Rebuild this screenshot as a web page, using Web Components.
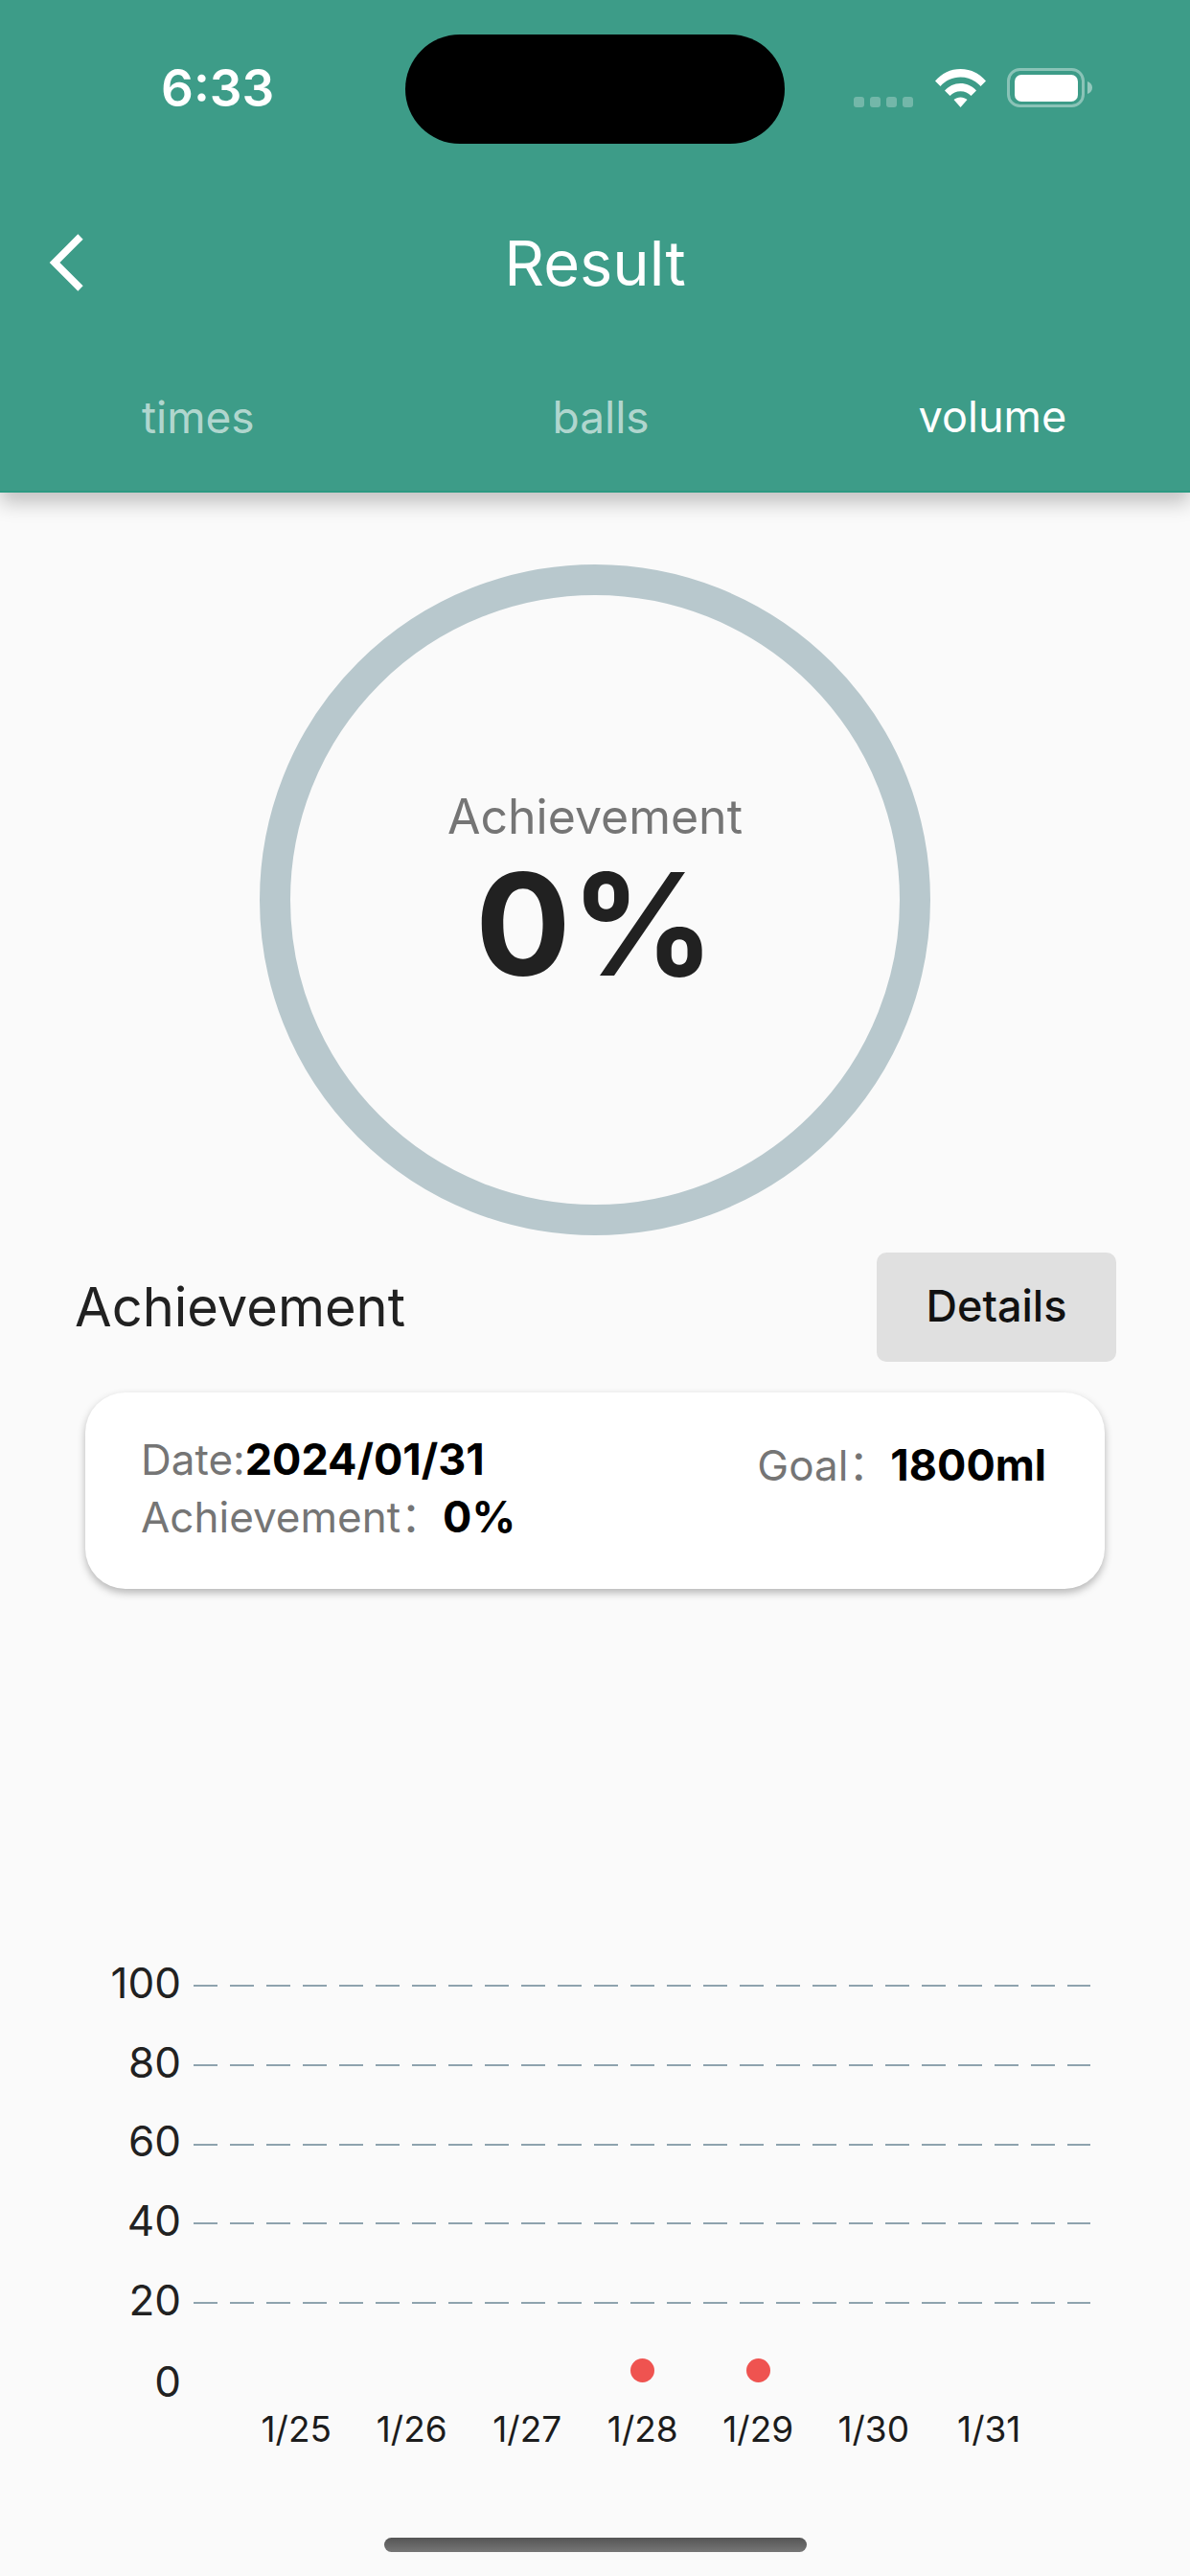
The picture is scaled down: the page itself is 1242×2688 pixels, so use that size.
<!DOCTYPE html>
<html lang="en">
<head>
<meta charset="utf-8">
<title>Result</title>
<style>
  html, body { margin: 0; padding: 0; background: #fafafa; }
  body { width: 1242px; height: 2688px; overflow: hidden; font-family: Inter, "Noto Sans CJK SC", "Liberation Sans", sans-serif; }
</style>
</head>
<body>
<result-page></result-page>
<script>
class StatusBar extends HTMLElement {
  constructor () {
    super()
    this._shadowRoot = this.attachShadow({ mode: 'open' })
    this._shadowRoot.innerHTML = `
      <style>
      :host { display: grid; grid-template-columns: 423px 396px 423px; padding-top: 36px; height: 114px; color: #fff; }
      .time { font-size: 53px; font-weight: 600; line-height: 112px; padding-left: 168px; }
      .island { background: #000; border-radius: 57px; height: 114px; }
      .icons { display: flex; align-items: flex-start; padding: 35px 0 0 72px; }
      svg { display: block; }
      </style>
      <div class="time">6:33</div>
      <div class="island"></div>
      <div class="icons">
        <svg width="250" height="42" viewBox="0 0 250 42">
          <g fill="#fff" fill-opacity=".28">
            <rect x="0" y="30" width="11" height="11" rx="3"/>
            <rect x="17" y="30" width="11" height="11" rx="3"/>
            <rect x="34" y="30" width="11" height="11" rx="3"/>
            <rect x="51" y="30" width="11" height="11" rx="3"/>
          </g>
          <path fill="#fff" d="M85 13.500C92 5.500 101 1 111.500 1S131 5.500 138 13.500L132.500 19C127 13 120 9.500 111.500 9.500S96 13 90.500 19Z"/>
          <path fill="#fff" d="M95 23.500C99 19 105 16 111.500 16S124 19 128 23.500L122.500 29C119.500 26 116 24.200 111.500 24.200S103.500 26 100.500 29Z"/>
          <path fill="#fff" d="M104.500 33C106.500 31.500 109 30.500 111.500 30.500S116.500 31.500 118.500 33L111.500 41Z"/>
          <rect x="161.500" y="1.500" width="78" height="38" rx="12" fill="none" stroke="#fff" stroke-opacity=".4" stroke-width="3"/>
          <rect x="168" y="7" width="66" height="28" rx="7" fill="#fff"/>
          <path fill="#fff" fill-opacity=".45" d="M244 14c3 1 5 3.500 5 6.500s-2 5.500-5 6.500Z"/>
        </svg>
      </div>
    `
  }
}

class AppHeader extends HTMLElement {
  constructor () {
    super()
    this._shadowRoot = this.attachShadow({ mode: 'open' })
    this._shadowRoot.innerHTML = `
      <style>
      :host { display: block; box-sizing: border-box; height: 514px; background: #3d9c88; color: #fff; border-bottom: 2px solid #2b9a82; box-shadow: 0 10px 20px rgba(0, 0, 0, .24); position: relative; }
      .bar { display: grid; grid-template-columns: 300px 642px 300px; align-items: center; height: 120px; margin-top: 64px; }
      .back { padding-left: 51px; }
      .back svg { display: block; }
      .title { font-size: 65px; font-weight: 400; text-align: center; }
      .tabs { display: flex; padding: 0 0 0 148px; margin-top: 76px; font-size: 46px; height: 50px; line-height: 50px; }
      </style>
      <status-bar></status-bar>
      <div class="bar">
        <div class="back">
          <svg width="38" height="62" viewBox="0 0 38 62"><path d="M33 4 6 31l27 27" fill="none" stroke="#fff" stroke-width="7.500"/></svg>
        </div>
        <div class="title">Result</div>
        <div></div>
      </div>
      <div class="tabs"><slot></slot></div>
    `
  }
}

class TabItem extends HTMLElement {
  constructor () {
    super()
    this._shadowRoot = this.attachShadow({ mode: 'open' })
    this._shadowRoot.innerHTML = `
      <style>
      :host { display: block; color: rgba(255, 255, 255, .62); }
      :host([active]) { color: #fff; font-size: 45px; }
      </style>
      <slot></slot>
    `
  }
}

class ProgressRing extends HTMLElement {
  constructor () {
    super()
    this._shadowRoot = this.attachShadow({ mode: 'open' })
    this._shadowRoot.innerHTML = `
      <style>
      :host { display: flex; flex-direction: column; align-items: center; justify-content: center; box-sizing: border-box; width: 700px; height: 700px; margin: 75px auto 0; border: 32px solid #b8c8cd; border-radius: 50%; }
      .label { font-size: 50px; color: #757575; line-height: 56px; margin-top: -14px; }
      .value { font-size: 148px; font-weight: 700; color: #212121; line-height: 150px; margin-top: 10px; }
      </style>
      <div class="label"><slot name="label"></slot></div>
      <div class="value"><slot name="value"></slot></div>
    `
  }
}

class SectionHead extends HTMLElement {
  constructor () {
    super()
    this._shadowRoot = this.attachShadow({ mode: 'open' })
    this._shadowRoot.innerHTML = `
      <style>
      :host { display: flex; justify-content: space-between; align-items: center; margin-top: 18px; padding: 0 77px 0 78px; }
      .title { font-size: 56px; color: #212121; }
      button { box-sizing: border-box; width: 250px; height: 114px; border: 0; border-radius: 10px; background: #e0e0e0; color: #111; font: 500 45px Inter, "Liberation Sans", sans-serif; padding: 0 0 4px; }
      </style>
      <div class="title"><slot></slot></div>
      <button><slot name="action"></slot></button>
    `
  }
}

class InfoCard extends HTMLElement {
  constructor () {
    super()
    this._shadowRoot = this.attachShadow({ mode: 'open' })
    this._shadowRoot.innerHTML = `
      <style>
      :host { display: grid; grid-template-columns: 1fr auto; box-sizing: border-box; width: 1064px; height: 205px; margin: 32px 0 0 89px; padding: 40px 61px 0 58px; background: #fff; border-radius: 42px; box-shadow: 0 4px 8px rgba(0, 0, 0, .28); font-size: 44px; line-height: 60px; color: #757575; }
      .goal { padding-top: 6px; }
      b { color: #000; font-weight: 700; font-size: 45px; }
      </style>
      <div>
        <div>Date:<b>2024/01/31</b></div>
        <div>Achievement：<b>0%</b></div>
      </div>
      <div class="goal">Goal：<b>1800ml</b></div>
    `
  }
}

class DashChart extends HTMLElement {
  constructor () {
    super()
    this._shadowRoot = this.attachShadow({ mode: 'open' })
  }

  connectedCallback () {
    const ticks = [100, 80, 60, 40, 20]
    const days = ['1/25', '1/26', '1/27', '1/28', '1/29', '1/30', '1/31']
    const marked = ['1/28', '1/29']
    this._shadowRoot.innerHTML = `
      <style>
      :host { display: block; margin-top: 373px; font-size: 44px; color: #212121; }
      .row { display: grid; grid-template-columns: 189px 936px; column-gap: 13px; align-items: center; height: 82.7px; }
      .tick { text-align: right; line-height: 76.7px; padding-bottom: 6px; }
      .dash { height: 2px; background: repeating-linear-gradient(90deg, #8ea3ae 0 25px, transparent 25px 38px); }
      .zero { height: 70.7px; align-items: start; }
      .zero .tick { line-height: 82.7px; padding-bottom: 0; }
      .days { display: grid; grid-template-columns: repeat(7, 120.5px); margin-left: 249px; }
      .mark { display: flex; justify-content: center; padding-top: 17px; }
      .mark i { display: block; width: 25px; height: 25px; border-radius: 50%; background: #ef5350; }
      .zero .days { margin-left: 47px; }
      .labels { font-size: 37px; line-height: 40px; text-align: center; color: #1c1c1c; }
      </style>
      ${ticks.map(t => `<div class="row"><div class="tick">${t}</div><div class="dash"></div></div>`).join('')}
      <div class="row zero">
        <div class="tick">0</div>
        <div class="days">${days.map(d => `<div class="mark">${marked.includes(d) ? '<i></i>' : ''}</div>`).join('')}</div>
      </div>
      <div class="days labels">${days.map(d => `<div>${d}</div>`).join('')}</div>
    `
  }
}

class HomeBar extends HTMLElement {
  constructor () {
    super()
    this._shadowRoot = this.attachShadow({ mode: 'open' })
    this._shadowRoot.innerHTML = `
      <style>
      :host { display: block; width: 441px; height: 15px; margin: 93px auto 0; border-radius: 8px; background: linear-gradient(#555, #767676); }
      </style>
    `
  }
}

class ResultPage extends HTMLElement {
  constructor () {
    super()
    this._shadowRoot = this.attachShadow({ mode: 'open' })
    this._shadowRoot.innerHTML = `
      <style>
      :host { display: block; width: 1242px; height: 2688px; background: #fafafa; }
      .times { margin-right: 311px; }
      .balls { margin-right: 281px; }
      </style>
      <app-header>
        <tab-item class="times">times</tab-item>
        <tab-item class="balls">balls</tab-item>
        <tab-item active>volume</tab-item>
      </app-header>
      <progress-ring>
        <span slot="label">Achievement</span>
        <span slot="value">0%</span>
      </progress-ring>
      <section-head>Achievement<span slot="action">Details</span></section-head>
      <info-card></info-card>
      <dash-chart></dash-chart>
      <home-bar></home-bar>
    `
  }
}

customElements.define('status-bar', StatusBar)
customElements.define('app-header', AppHeader)
customElements.define('tab-item', TabItem)
customElements.define('progress-ring', ProgressRing)
customElements.define('section-head', SectionHead)
customElements.define('info-card', InfoCard)
customElements.define('dash-chart', DashChart)
customElements.define('home-bar', HomeBar)
customElements.define('result-page', ResultPage)
</script>
</body>
</html>
